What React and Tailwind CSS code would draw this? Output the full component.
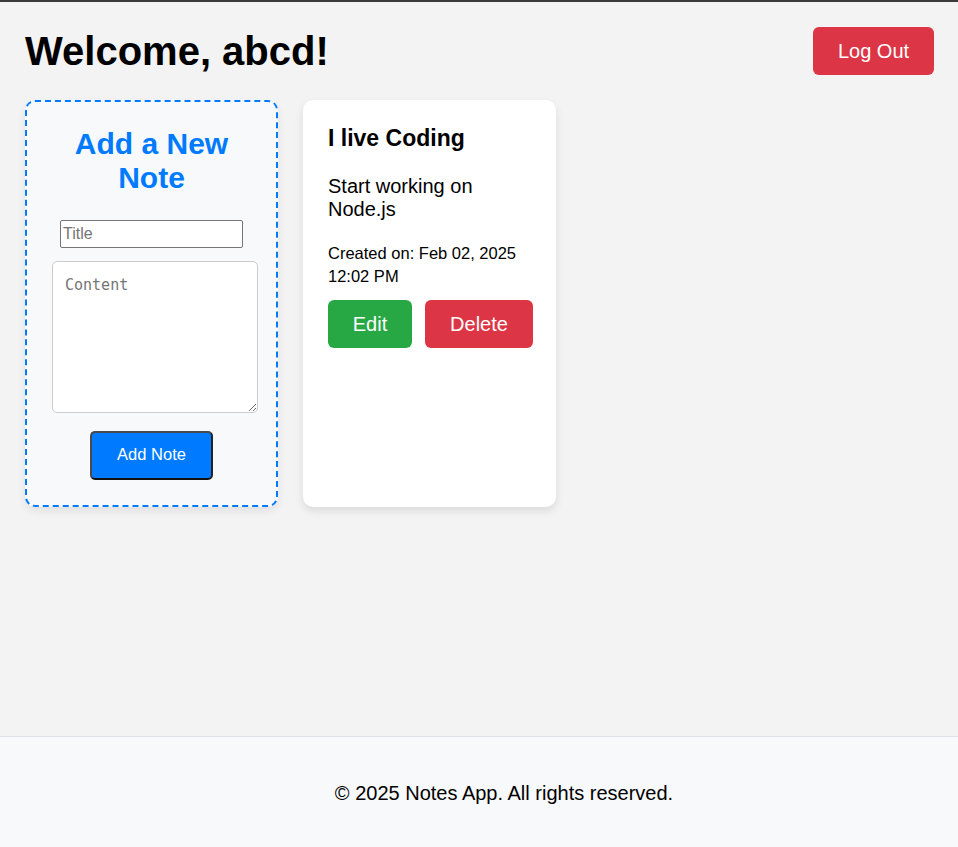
export default function App() {
  return (
    <div className="min-h-screen flex flex-col bg-[#f3f3f3] text-black" style={{ fontFamily: '"Liberation Sans", Arial, sans-serif' }}>
      <div className="h-[2px] bg-[#3a3a3a]" />
      <main className="flex-1 pl-[25px] pr-[24px] pt-[25px]">
        <header className="flex items-center justify-between h-[48px]">
          <h1 className="text-[40px] font-bold leading-[48px]">Welcome, abcd!</h1>
          <button className="w-[121px] h-[48px] bg-[#dc3545] rounded-[6px] text-white text-[20px]">Log Out</button>
        </header>
        <div className="mt-[25px] flex gap-[25px] items-stretch">
          <div className="w-[253px] border-2 border-dashed border-[#007bff] rounded-[10px] bg-[#f8f9fa] shadow-[0_4px_8px_rgba(0,0,0,0.08)] pt-[24.5px] pb-[25px] px-[25px]">
            <h2 className="text-[30px] font-bold leading-[34.5px] text-[#007bff] text-center">Add a New Note</h2>
            <div className="flex justify-center mt-[24.5px]">
              <input
                type="text"
                placeholder="Title"
                className="w-[183px] h-[28px] bg-white border border-[#767676] rounded-[2px] px-[2px] text-[16px] placeholder:text-[#757575] outline-none"
              />
            </div>
            <textarea
              placeholder="Content"
              className="block mt-[13px] w-[206px] h-[152px] bg-white border border-[#ccc] rounded-[5px] p-[12px] text-[15px] placeholder:text-[#757575] outline-none"
              style={{ fontFamily: '"DejaVu Sans Mono", monospace' }}
            />
            <div className="flex justify-center mt-[18px]">
              <button className="w-[123px] h-[49px] pb-[2px] bg-[#007bff] border-2 border-[#4a4a4a] border-b-[#111] border-r-[#222] rounded-[5px] text-white text-[16.5px]">Add Note</button>
            </div>
          </div>
          <div className="w-[253px] bg-white rounded-[10px] shadow-[0_4px_8px_rgba(0,0,0,0.1)] p-[25px]">
            <h3 className="text-[23px] font-bold leading-[26.5px]">I live Coding</h3>
            <p className="mt-[23.5px] text-[20px] leading-[23px]">Start working on Node.js</p>
            <p className="mt-[21px] text-[16.5px] leading-[23px]">Created on: Feb 02, 2025 12:02 PM</p>
            <div className="mt-[12px] flex gap-[13px]">
              <button className="shrink-0 w-[84px] h-[48px] bg-[#28a745] rounded-[6px] text-white text-[20px]">Edit</button>
              <button className="shrink-0 w-[108px] h-[48px] bg-[#dc3545] rounded-[6px] text-white text-[20px]">Delete</button>
            </div>
          </div>
        </div>
      </main>
      <footer className="h-[111px] border-t border-[#dee2e6] bg-[#f8f9fa] flex items-center justify-center pl-[50px] pt-[2px]">
        <p className="text-[20px] leading-[23px]">© 2025 Notes App. All rights reserved.</p>
      </footer>
    </div>
  );
}
